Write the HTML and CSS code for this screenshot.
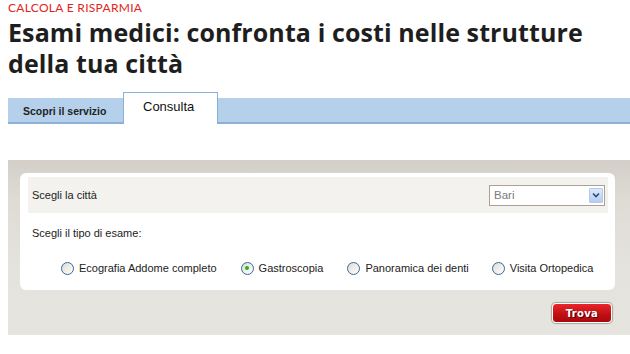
FILE: index.html
```html
<!DOCTYPE html>
<html lang="it">
<head>
<meta charset="utf-8">
<link rel="stylesheet" href="styles.css">
</head>
<body>
<div class="page">
  <div class="kicker">CALCOLA E RISPARMIA</div>
  <h1 class="title">Esami medici: confronta i costi nelle strutture della tua città</h1>
  <div class="tabs">
    <div class="tab">Scopri il servizio</div>
    <div class="tab active">Consulta</div>
  </div>
  <div class="panel">
    <div class="card">
      <div class="row-city">
        <span>Scegli la città</span>
        <div class="select">
          <span class="select-val">Bari</span>
          <span class="select-btn"><svg width="8" height="6" viewBox="0 0 8 6"><path d="M1 1.5 L4 4.5 L7 1.5" fill="none" stroke="#2c4a7a" stroke-width="1.6"/></svg></span>
        </div>
      </div>
      <div class="label-exam">Scegli il tipo di esame:</div>
      <div class="radios">
        <label class="radio"><span class="dot"></span>Ecografia Addome completo</label>
        <label class="radio"><span class="dot checked"></span>Gastroscopia</label>
        <label class="radio"><span class="dot"></span>Panoramica dei denti</label>
        <label class="radio"><span class="dot"></span>Visita Ortopedica</label>
      </div>
    </div>
    <div class="actions">
      <button class="btn-trova">Trova</button>
    </div>
  </div>
</div>
</body>
</html>
```

FILE: styles.css
```css
html, body { margin: 0; padding: 0; background: #fff; overflow: hidden; }
.page { padding-left: 8px; width: 622px; font-family: "Liberation Sans", Arial, sans-serif; }
.kicker { color: #e1251e; font-family: "Lato", "Liberation Sans", sans-serif; font-size: 12px; letter-spacing: 0.3px; line-height: 13px; padding-top: 1px; }
.title { margin: 3px 0 0 0; max-width: 600px; font-family: "Open Sans", "Lato", sans-serif; font-weight: 700; font-size: 25px; line-height: 31px; color: #1e1e1e; letter-spacing: 0.1px; }
.tabs { margin-top: 19px; display: flex; align-items: flex-end; background: #b5d0eb; border-bottom: 2px solid #8cafd6; height: 24px; }
.tab { font-size: 10.5px; font-weight: bold; color: #222; height: 24px; line-height: 26px; padding: 0 12px 0 15px; width: 87px; }
.active { background: #fff; border: 1px solid #8cafd6; border-bottom: none; font-weight: normal; font-size: 13px; color: #111; height: 31px; line-height: 28px; margin-bottom: -2px; margin-left: 1px; padding: 0 20px 0 19px; width: 54px; box-sizing: content-box; }
.panel { margin-top: 36px; height: 175px; background: linear-gradient(#d3cfc8 0px, #dedbd5 40px, #e5e3de 110px, #e6e4df 175px); padding: 13px 15px 0 12px; box-sizing: border-box; }
.card { background: #fff; border-radius: 6px; height: 117px; padding: 4px 7px 0 8px; box-sizing: border-box; font-size: 11px; color: #222; }
.row-city { background: #f3f2ef; height: 36px; display: flex; align-items: center; justify-content: space-between; padding: 0 3px 0 4px; }
.select { width: 109px; height: 19px; border: 1px solid #a9a292; background: #fff; display: flex; align-items: center; justify-content: space-between; padding: 0 1px 0 4px; box-sizing: content-box; }
.select-val { color: #7a7a7a; font-size: 11.5px; }
.select-btn { width: 14px; height: 15px; background: linear-gradient(#dde9fb, #b4cdf2); border: 1px solid #b7c9e6; box-sizing: border-box; display: flex; align-items: center; justify-content: center; border-radius: 1px; }
.label-exam { margin-top: 13px; padding-left: 4px; line-height: 14px; }
.radios { margin-top: 21px; display: flex; padding-left: 33px; line-height: 14px; white-space: nowrap; }
.radio { display: flex; align-items: center; margin-right: 24px; }
.radio:nth-child(3) { margin-right: 23px; }
.dot { flex: none; width: 11px; height: 11px; border: 1px solid #3f6693; border-radius: 50%; background: linear-gradient(135deg, #dcdcd6, #ffffff); margin-right: 5px; position: relative; }
.checked::after { content: ""; position: absolute; left: 3.5px; top: 3.5px; width: 4px; height: 4px; border-radius: 50%; background: #24b024; }
.actions { display: flex; justify-content: flex-end; padding-top: 13px; padding-right: 3px; }
.btn-trova { width: 60px; height: 20px; border: 1px solid #fff; border-radius: 4px; box-shadow: 0 0 1px 1px #a8a49c; background: linear-gradient(#e8262a, #c00e13 60%, #a8080c); color: #fff; font-family: "DejaVu Sans", Verdana, sans-serif; font-weight: bold; font-size: 10px; text-shadow: 1px 1px 0 #5a0000; letter-spacing: 0.3px; padding: 0; }
```
